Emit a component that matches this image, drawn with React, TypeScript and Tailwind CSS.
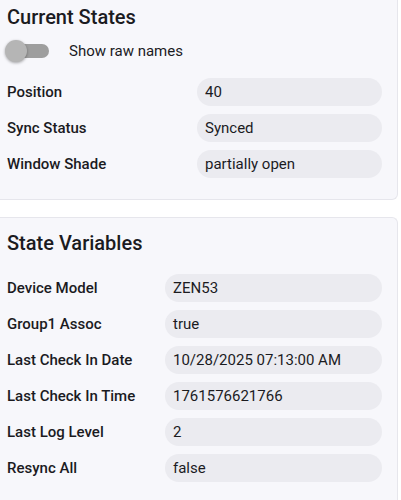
const CURRENT = [
  { label: 'Position', value: '40' },
  { label: 'Sync Status', value: 'Synced' },
  { label: 'Window Shade', value: 'partially open' },
] as const;

const VARIABLES = [
  { label: 'Device Model', value: 'ZEN53' },
  { label: 'Group1 Assoc', value: 'true' },
  { label: 'Last Check In Date', value: '10/28/2025 07:13:00 AM' },
  { label: 'Last Check In Time', value: '1761576621766' },
  { label: 'Last Log Level', value: '2' },
  { label: 'Resync All', value: 'false' },
] as const;

function Row({ label, value, labelW }: { label: string; value: string; labelW: string }) {
  return (
    <div className="flex h-[28px] items-center">
      <span className={`${labelW} shrink-0 text-[15px] font-medium text-[#1b1b1f]`}>{label}</span>
      <span className="flex h-[28px] flex-1 items-center rounded-[14px] bg-[#ebebf0] pl-2 text-[15px] text-[#1b1b1f]">
        {value}
      </span>
    </div>
  );
}

export default function App() {
  return (
    <div className="min-h-[500px] w-[401px] bg-white font-['Roboto',sans-serif]">
      <div className="w-[398px] rounded-br-md border-r border-b border-[#e6e6ec] bg-[#f7f7fb] pb-[21px] pl-[7px] pr-[15px] pt-[3px]">
        <h2 className="text-[20px] leading-[28px] font-medium text-[#1b1b1f]">Current States</h2>
        <div className="mt-[9px] flex h-[22px] items-center">
          <div className="relative h-[22px] w-[44px]">
            <div className="absolute left-[3px] top-[4px] h-[14px] w-[39px] rounded-full bg-[#9e9e9e]" />
            <div className="absolute left-[-2px] top-0 h-[22px] w-[22px] rounded-full bg-[#b5b5b5] shadow-[0_1px_3px_rgba(0,0,0,0.35)]" />
          </div>
          <span className="ml-[18px] text-[15px] text-[#1b1b1f]">Show raw names</span>
        </div>
        <div className="mt-[16px] flex flex-col gap-2">
          {CURRENT.map(r => (
            <Row key={r.label} label={r.label} value={r.value} labelW="w-[190px]" />
          ))}
        </div>
      </div>

      <div className="mt-[17px] w-[398px] rounded-tr-md border-t border-r border-[#e6e6ec] bg-[#f7f7fb] pb-6 pl-[7px] pr-[15px] pt-[11px]">
        <h2 className="text-[20px] leading-[28px] font-medium text-[#1b1b1f]">State Variables</h2>
        <div className="mt-[17px] flex flex-col gap-2">
          {VARIABLES.map(r => (
            <Row key={r.label} label={r.label} value={r.value} labelW="w-[158px]" />
          ))}
        </div>
      </div>
    </div>
  );
}
